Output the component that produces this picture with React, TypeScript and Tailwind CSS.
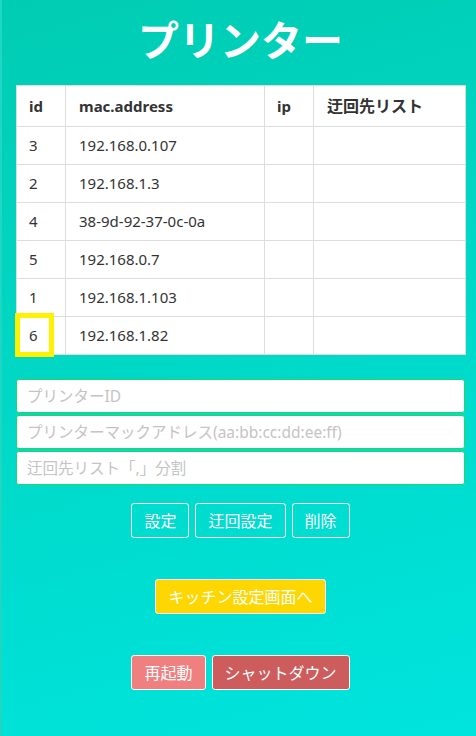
import React from "react";

const rows = [
  ["3", "192.168.0.107"],
  ["2", "192.168.1.3"],
  ["4", "38-9d-92-37-0c-0a"],
  ["5", "192.168.0.7"],
  ["1", "192.168.1.103"],
  ["6", "192.168.1.82"],
];

export default function App() {
  return (
    <div
      className="relative w-[476px] h-[736px] overflow-hidden bg-[linear-gradient(165deg,#00ccb2_0%,#00d9c8_50%,#00e4de_100%)] border-l-2 border-[#1fd6c2] pl-[14px] pr-[11px]"
      style={{ fontFamily: '"Noto Sans", "Noto Sans CJK JP", sans-serif' }}
    >
      <h1 className="pt-[10px] h-[70px] mb-[15px] text-center text-white font-bold text-[41px] leading-[60px]">
        プリンター
      </h1>
      <div className="relative">
        <table className="w-[449px] border-collapse bg-white text-[#333] text-[15px] table-fixed">
          <colgroup>
            <col className="w-[49px]" />
            <col className="w-[199px]" />
            <col className="w-[49px]" />
            <col className="w-[152px]" />
          </colgroup>
          <thead>
            <tr className="h-[41px]">
              <th className="border border-[#dddddd] text-left pl-[12px] font-bold">id</th>
              <th className="border border-[#dddddd] text-left pl-[13px] font-bold">mac.address</th>
              <th className="border border-[#dddddd] text-left pl-[12px] font-bold">ip</th>
              <th className="border border-[#dddddd] text-left pl-[13px] font-bold text-[16px]">迂回先リスト</th>
            </tr>
          </thead>
          <tbody>
            {rows.map(([id, mac]) => (
              <tr key={id} className="h-[38px]">
                <td className="border border-[#dddddd] pl-[12px]">{id}</td>
                <td className="border border-[#dddddd] pl-[13px]">{mac}</td>
                <td className="border border-[#dddddd]"></td>
                <td className="border border-[#dddddd]"></td>
              </tr>
            ))}
          </tbody>
        </table>
        <div className="absolute left-[-1px] bottom-[-2px] w-[39px] h-[44px] border-[5px] border-[#fff200]" />
      </div>
      <div className="mt-[24px] flex flex-col gap-[2px] w-[449px]">
        {["プリンターID", "プリンターマックアドレス(aa:bb:cc:dd:ee:ff)", "迂回先リスト「,」分割"].map((p) => (
          <input
            key={p}
            placeholder={p}
            className="h-[34px] w-full bg-white border border-[#22d46b] rounded-[3px] px-[10px] text-[15.5px] placeholder:text-[#c4c4c4] outline-none"
            style={{ fontFamily: '"Noto Sans", "Noto Sans CJK JP", sans-serif' }}
          />
        ))}
      </div>
      <div className="mt-[18px] flex justify-center gap-[6px] w-[449px]">
        <button className="h-[35px] px-[12px] border border-white rounded-[3px] text-white text-[16px]">設定</button>
        <button className="h-[35px] px-[12px] border border-white rounded-[3px] text-white text-[16px]">迂回設定</button>
        <button className="h-[35px] px-[12px] border border-white rounded-[3px] text-white text-[16px]">削除</button>
      </div>
      <div className="mt-[41px] flex justify-center w-[449px]">
        <button className="h-[35px] px-[12px] border border-white rounded-[3px] bg-[#ffd700] text-white text-[16px]">キッチン設定画面へ</button>
      </div>
      <div className="mt-[41px] flex justify-center gap-[6px] w-[449px]">
        <button className="h-[35px] px-[12px] border border-white rounded-[3px] bg-[#f08080] text-white text-[16px]">再起動</button>
        <button className="h-[35px] px-[12px] border border-white rounded-[3px] bg-[#cd5c5c] text-white text-[16px]">シャットダウン</button>
      </div>
    </div>
  );
}
